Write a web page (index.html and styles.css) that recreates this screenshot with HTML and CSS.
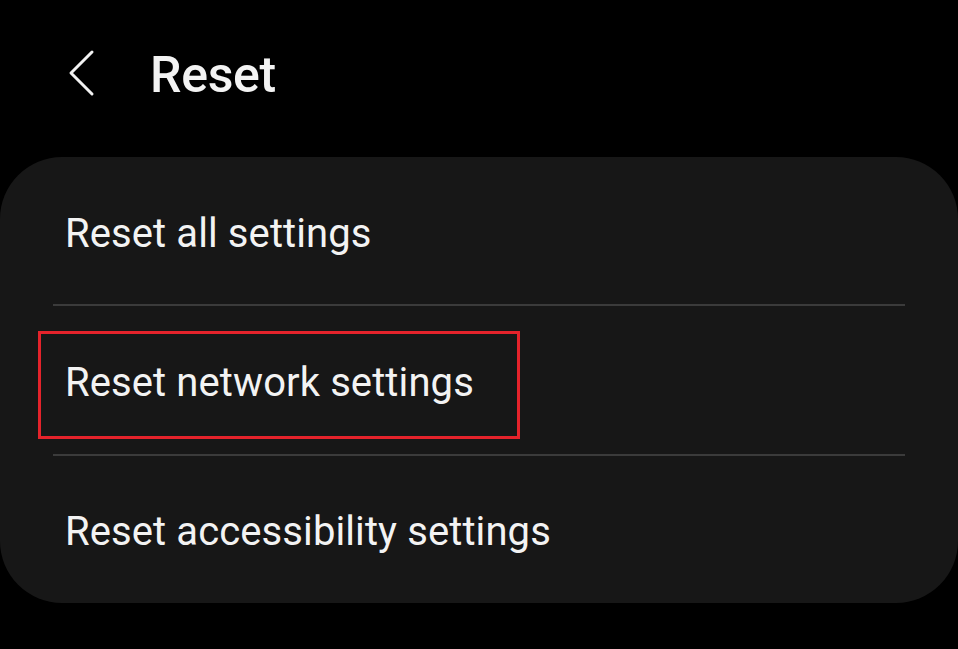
FILE: index.html
```html
<!DOCTYPE html>
<html>
<head>
<meta charset="utf-8">
<link rel="stylesheet" href="styles.css">
</head>
<body>
<div class="screen">
  <header class="header">
    <svg class="back" width="30" height="50" viewBox="0 0 30 50">
      <path d="M25 4 L4 25 L25 46" fill="none" stroke="#f2f2f2" stroke-width="3" stroke-linecap="round" stroke-linejoin="round"/>
    </svg>
    <h1 class="title">Reset</h1>
  </header>
  <section class="card">
    <div class="row"><span class="label">Reset all settings</span></div>
    <div class="divider"></div>
    <div class="row"><span class="label highlight">Reset network settings</span></div>
    <div class="divider"></div>
    <div class="row"><span class="label">Reset accessibility settings</span></div>
  </section>
</div>
</body>
</html>
```
FILE: styles.css
```css
html, body {
  margin: 0;
  padding: 0;
  background: #000;
}
body {
  font-family: Roboto, "Noto Sans", sans-serif;
  color: #f3f3f3;
  width: 958px;
  height: 649px;
  overflow: hidden;
}
.header {
  height: 157px;
  display: flex;
  align-items: center;
  padding-left: 67px;
  padding-bottom: 8px;
  box-sizing: border-box;
}
.back {
  display: block;
  margin-top: -4px;
}
.title {
  margin: 0 0 0 53px;
  font-size: 50px;
  font-weight: 500;
  letter-spacing: -0.3px;
}
.card {
  background: #171717;
  border-radius: 62px;
  height: 446px;
  display: flex;
  flex-direction: column;
}
.row {
  height: 149px;
  display: flex;
  align-items: center;
  padding-left: 65px;
}
.label {
  font-size: 40px;
  font-weight: 400;
  letter-spacing: 0.1px;
  margin-top: 5px;
}
.highlight {
  position: relative;
}
.highlight::before {
  content: "";
  position: absolute;
  left: -27px;
  right: -46px;
  top: -28px;
  bottom: -33px;
  border: 3px solid #e4232b;
}
.divider {
  height: 2px;
  background: #3b3b3b;
  margin: 0 53px;
}
```
